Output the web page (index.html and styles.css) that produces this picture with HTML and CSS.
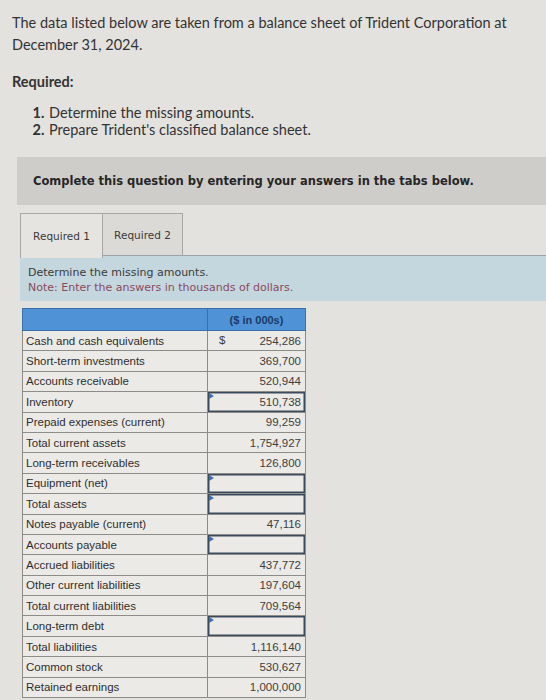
FILE: index.html
```html
<!DOCTYPE html>
<html>
<head>
<meta charset="utf-8">
<link rel="stylesheet" href="styles.css">
</head>
<body>
<div class="page">
  <p class="intro">The data listed below are taken from a balance sheet of Trident Corporation at December 31, 2024.</p>
  <p class="req">Required:</p>
  <ol class="steps">
    <li>Determine the missing amounts.</li>
    <li>Prepare Trident's classified balance sheet.</li>
  </ol>
  <div class="banner">Complete this question by entering your answers in the tabs below.</div>
  <div class="tabs">
    <div class="tab active">Required 1</div>
    <div class="tab">Required 2</div>
  </div>
  <div class="panel">
    <div>Determine the missing amounts.</div>
    <div class="note">Note: Enter the answers in thousands of dollars.</div>
  </div>
  <table class="sheet">
    <thead>
      <tr><th></th><th class="hdr">($ in 000s)</th></tr>
    </thead>
    <tbody>
      <tr><td>Cash and cash equivalents</td><td class="val"><span class="cur">$</span><span>254,286</span></td></tr>
      <tr><td>Short-term investments</td><td class="val"><span>369,700</span></td></tr>
      <tr><td>Accounts receivable</td><td class="val"><span>520,944</span></td></tr>
      <tr><td>Inventory</td><td class="val input"><span>510,738</span></td></tr>
      <tr><td>Prepaid expenses (current)</td><td class="val"><span>99,259</span></td></tr>
      <tr><td>Total current assets</td><td class="val"><span>1,754,927</span></td></tr>
      <tr><td>Long-term receivables</td><td class="val"><span>126,800</span></td></tr>
      <tr><td>Equipment (net)</td><td class="val input"><span></span></td></tr>
      <tr><td>Total assets</td><td class="val input"><span></span></td></tr>
      <tr><td>Notes payable (current)</td><td class="val"><span>47,116</span></td></tr>
      <tr><td>Accounts payable</td><td class="val input"><span></span></td></tr>
      <tr><td>Accrued liabilities</td><td class="val"><span>437,772</span></td></tr>
      <tr><td>Other current liabilities</td><td class="val"><span>197,604</span></td></tr>
      <tr><td>Total current liabilities</td><td class="val"><span>709,564</span></td></tr>
      <tr><td>Long-term debt</td><td class="val input"><span></span></td></tr>
      <tr><td>Total liabilities</td><td class="val"><span>1,116,140</span></td></tr>
      <tr><td>Common stock</td><td class="val"><span>530,627</span></td></tr>
      <tr><td>Retained earnings</td><td class="val"><span>1,000,000</span></td></tr>
    </tbody>
  </table>
</div>
</body>
</html>
```

FILE: styles.css
```css
html, body {
  margin: 0;
  padding: 0;
  background: #e4e2de;
}
.page {
  padding: 12px 0 0 0;
  color: #333333;
  font-family: Lato, "Liberation Sans", sans-serif;
}
.intro {
  margin: 0 0 0 12px;
  width: 520px;
  font-size: 14.5px;
  line-height: 22px;
}
.req {
  margin: 16px 0 0 12px;
  font-size: 14.5px;
  font-weight: 700;
  line-height: 20px;
}
.steps {
  margin: 12px 0 0 0;
  padding: 0 0 0 48px;
  font-size: 14.5px;
  line-height: 17px;
}
.steps li {
  padding-left: 1px;
}
.steps li::marker {
  font-weight: 700;
}
.banner {
  margin: 19px 0 0 17px;
  height: 48px;
  padding-left: 16px;
  display: flex;
  align-items: center;
  background: #cfcdca;
  font-family: "DejaVu Sans", sans-serif;
  font-weight: 700;
  font-size: 11.5px;
  color: #262626;
}
.tabs {
  display: flex;
  margin: 8px 0 0 20px;
  height: 42px;
  position: relative;
  z-index: 1;
}
.tab {
  box-sizing: border-box;
  height: 42px;
  display: flex;
  align-items: center;
  justify-content: center;
  white-space: nowrap;
  border: 1px solid #a9a7a3;
  border-bottom: none;
  background: #dcdad6;
  font-family: "DejaVu Sans", sans-serif;
  font-size: 10.5px;
  color: #3a3a3a;
}
.tab.active {
  width: 83px;
  height: 45px;
  background: #e6e4e0;
}
.tab + .tab {
  width: 80px;
  border-left: none;
}
.panel {
  margin: 0 0 0 20px;
  height: 46px;
  box-sizing: border-box;
  padding: 9px 0 0 8px;
  background: #c4d7df;
  border-top: 1px solid #9aa4a8;
  font-family: "DejaVu Sans", sans-serif;
  font-size: 11px;
  line-height: 15px;
  color: #3a3a3a;
}
.note {
  color: #8a4a5c;
}
.sheet {
  margin: 7px 0 0 22px;
  border-collapse: collapse;
  font-family: "Liberation Sans", Arial, sans-serif;
  font-size: 11.5px;
  color: #2e2e2e;
}
.sheet th {
  height: 21px;
  padding: 0;
  background: #4f93d6;
  border: 1px solid #3a6fa8;
}
.sheet th:first-child {
  width: 184px;
}
.sheet th.hdr {
  width: 97px;
  font-weight: 700;
  font-size: 11px;
  color: #1c3a68;
  text-align: center;
}
.sheet td {
  height: 19.4px;
  padding: 0 3px;
  border: 1px solid #8d8c89;
  background: #eceae7;
  white-space: nowrap;
}
.sheet td.val {
  padding: 0;
  position: relative;
}
.val {
  text-align: right;
  color: #3d3d3d;
}
.val span {
  padding-right: 4px;
}
.cur {
  position: absolute;
  left: 11px;
  top: 3px;
}
.sheet td.input {
  box-shadow: inset 0 0 0 1.5px #3c4b5c;
}
.sheet td.input::before {
  content: "";
  position: absolute;
  left: 1px;
  top: 1px;
  border-left: 5px solid #3a6fb6;
  border-top: 3px solid transparent;
  border-bottom: 3px solid transparent;
}
```
